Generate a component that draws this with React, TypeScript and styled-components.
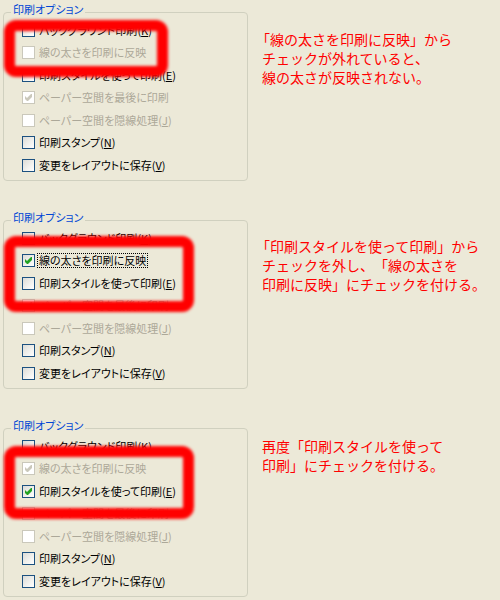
import React from "react";
import styled, { createGlobalStyle } from "styled-components";

const GlobalStyle = createGlobalStyle`
  html, body {
    margin: 0;
    padding: 0;
    background: #ece9d8;
  }
  body {
    width: 500px;
    height: 600px;
    overflow: hidden;
    font-family: "Noto Sans CJK JP", "Noto Sans", sans-serif;
  }
`;

type Item = {
  label: string;
  accel?: string;
  checked?: boolean;
  disabled?: boolean;
  focused?: boolean;
};

type Highlight = { top: number; left: number; width: number; height: number };

type SectionData = {
  items: Item[];
  note: string[];
  noteTop: number;
  highlight: Highlight;
};

const base = (over: Partial<Item>[]): Item[] => {
  const labels: Item[] = [
    { label: "バックグラウンド印刷", accel: "K" },
    { label: "線の太さを印刷に反映" },
    { label: "印刷スタイルを使って印刷", accel: "E" },
    { label: "ペーパー空間を最後に印刷" },
    { label: "ペーパー空間を隠線処理", accel: "J" },
    { label: "印刷スタンプ", accel: "N" },
    { label: "変更をレイアウトに保存", accel: "V" },
  ];
  return labels.map((l, i) => ({ ...l, ...over[i] }));
};

const sections: SectionData[] = [
  {
    items: base([
      {},
      { disabled: true },
      {},
      { disabled: true, checked: true },
      { disabled: true },
      {},
      {},
    ]),
    note: [
      "「線の太さを印刷に反映」から",
      "チェックが外れていると、",
      "線の太さが反映されない。",
    ],
    noteTop: 30,
    highlight: { top: 20, left: 4, width: 164, height: 57 },
  },
  {
    items: base([
      {},
      { checked: true, focused: true },
      {},
      { disabled: true, checked: true },
      { disabled: true },
      {},
      {},
    ]),
    note: [
      "「印刷スタイルを使って印刷」から",
      "チェックを外し、\u3000「線の太さを",
      "印刷に反映」にチェックを付ける。",
    ],
    noteTop: 29,
    highlight: { top: 28, left: 4, width: 190, height: 76 },
  },
  {
    items: base([
      {},
      { disabled: true, checked: true },
      { checked: true },
      { disabled: true, checked: true },
      { disabled: true },
      {},
      {},
    ]),
    note: ["再度「印刷スタイルを使って", "印刷」にチェックを付ける。"],
    noteTop: 21,
    highlight: { top: 30, left: 4, width: 190, height: 73 },
  },
];

const Page = styled.div`
  display: flex;
  flex-direction: column;
  width: 500px;
`;

const Section = styled.section`
  position: relative;
  display: flex;
  align-items: flex-start;
  height: 208px;
`;

const GroupBox = styled.fieldset`
  box-sizing: border-box;
  width: 245px;
  margin: 3px 0 0 3px;
  padding: 0 7px 3px;
  border: 1px solid #d0d0bf;
  border-radius: 4px;
  min-inline-size: 0;
`;

const Legend = styled.legend`
  padding: 0 2px 6px;
  font-size: 11px;
  line-height: 12px;
  color: #0046d5;
  font-feature-settings: "palt";
`;

const Rows = styled.div`
  display: flex;
  flex-direction: column;
  margin-top: -2px;
  padding-left: 11px;
`;

const Row = styled.div<{ $disabled?: boolean }>`
  display: flex;
  align-items: center;
  height: 22.5px;
  gap: 3px;
  font-size: 11px;
  line-height: 13px;
  color: ${(p) => (p.$disabled ? "#aca899" : "#000")};
  font-feature-settings: "palt";
  white-space: nowrap;
`;

const Box = styled.span<{ $disabled?: boolean }>`
  box-sizing: border-box;
  flex: none;
  width: 13px;
  height: 13px;
  border: 1px solid ${(p) => (p.$disabled ? "#cac8bb" : "#1c5180")};
  background: ${(p) =>
    p.$disabled
      ? "#ffffff"
      : "linear-gradient(135deg, #dcdcd7 0%, #f2f2ef 60%, #ffffff 100%)"};
  display: flex;
  align-items: center;
  justify-content: center;
`;

const Text = styled.span<{ $focused?: boolean }>`
  padding: 0 1px;
  outline: ${(p) => (p.$focused ? "1px dotted #000" : "none")};
  outline-offset: 0;
`;

const Note = styled.p<{ $top: number }>`
  margin: ${(p) => p.$top}px 0 0 14px;
  font-size: 14px;
  line-height: 19px;
  color: #ff0000;
  white-space: nowrap;
`;

const LeadQuote = styled.span`
  margin-left: -6px;
`;

const Mark = styled.div<Highlight>`
  position: absolute;
  top: ${(p) => p.top}px;
  left: ${(p) => p.left}px;
  width: ${(p) => p.width}px;
  height: ${(p) => p.height}px;
  box-sizing: border-box;
  border: 11px solid #ff0000;
  border-radius: 12px;
  filter: blur(1.4px);
  pointer-events: none;
`;

const Check = ({ color }: { color: string }) => (
  <svg width="7" height="7" viewBox="0 0 7 7">
    <polygon points="0,2 2,4 6,0 7,0 7,3 3,7 2,7 0,5" fill={color} />
  </svg>
);

const CheckRow = ({ item }: { item: Item }) => (
  <Row $disabled={item.disabled}>
    <Box $disabled={item.disabled}>
      {item.checked && <Check color={item.disabled ? "#cac8bb" : "#21a121"} />}
    </Box>
    <Text $focused={item.focused}>
      {item.label}
      {item.accel && (
        <>
          (<u>{item.accel}</u>)
        </>
      )}
    </Text>
  </Row>
);

const NoteLine = ({ line }: { line: string }) =>
  line.startsWith("「") ? (
    <>
      <LeadQuote>「</LeadQuote>
      {line.slice(1)}
    </>
  ) : (
    <>{line}</>
  );

export default function App() {
  return (
    <>
      <GlobalStyle />
      <Page>
        {sections.map((s, i) => (
          <Section key={i}>
            <GroupBox>
              <Legend>印刷オプション</Legend>
              <Rows>
                {s.items.map((it, j) => (
                  <CheckRow key={j} item={it} />
                ))}
              </Rows>
            </GroupBox>
            <Note $top={s.noteTop}>
              {s.note.map((line, k) => (
                <React.Fragment key={k}>
                  <NoteLine line={line} />
                  {k < s.note.length - 1 && <br />}
                </React.Fragment>
              ))}
            </Note>
            <Mark {...s.highlight} />
          </Section>
        ))}
      </Page>
    </>
  );
}
